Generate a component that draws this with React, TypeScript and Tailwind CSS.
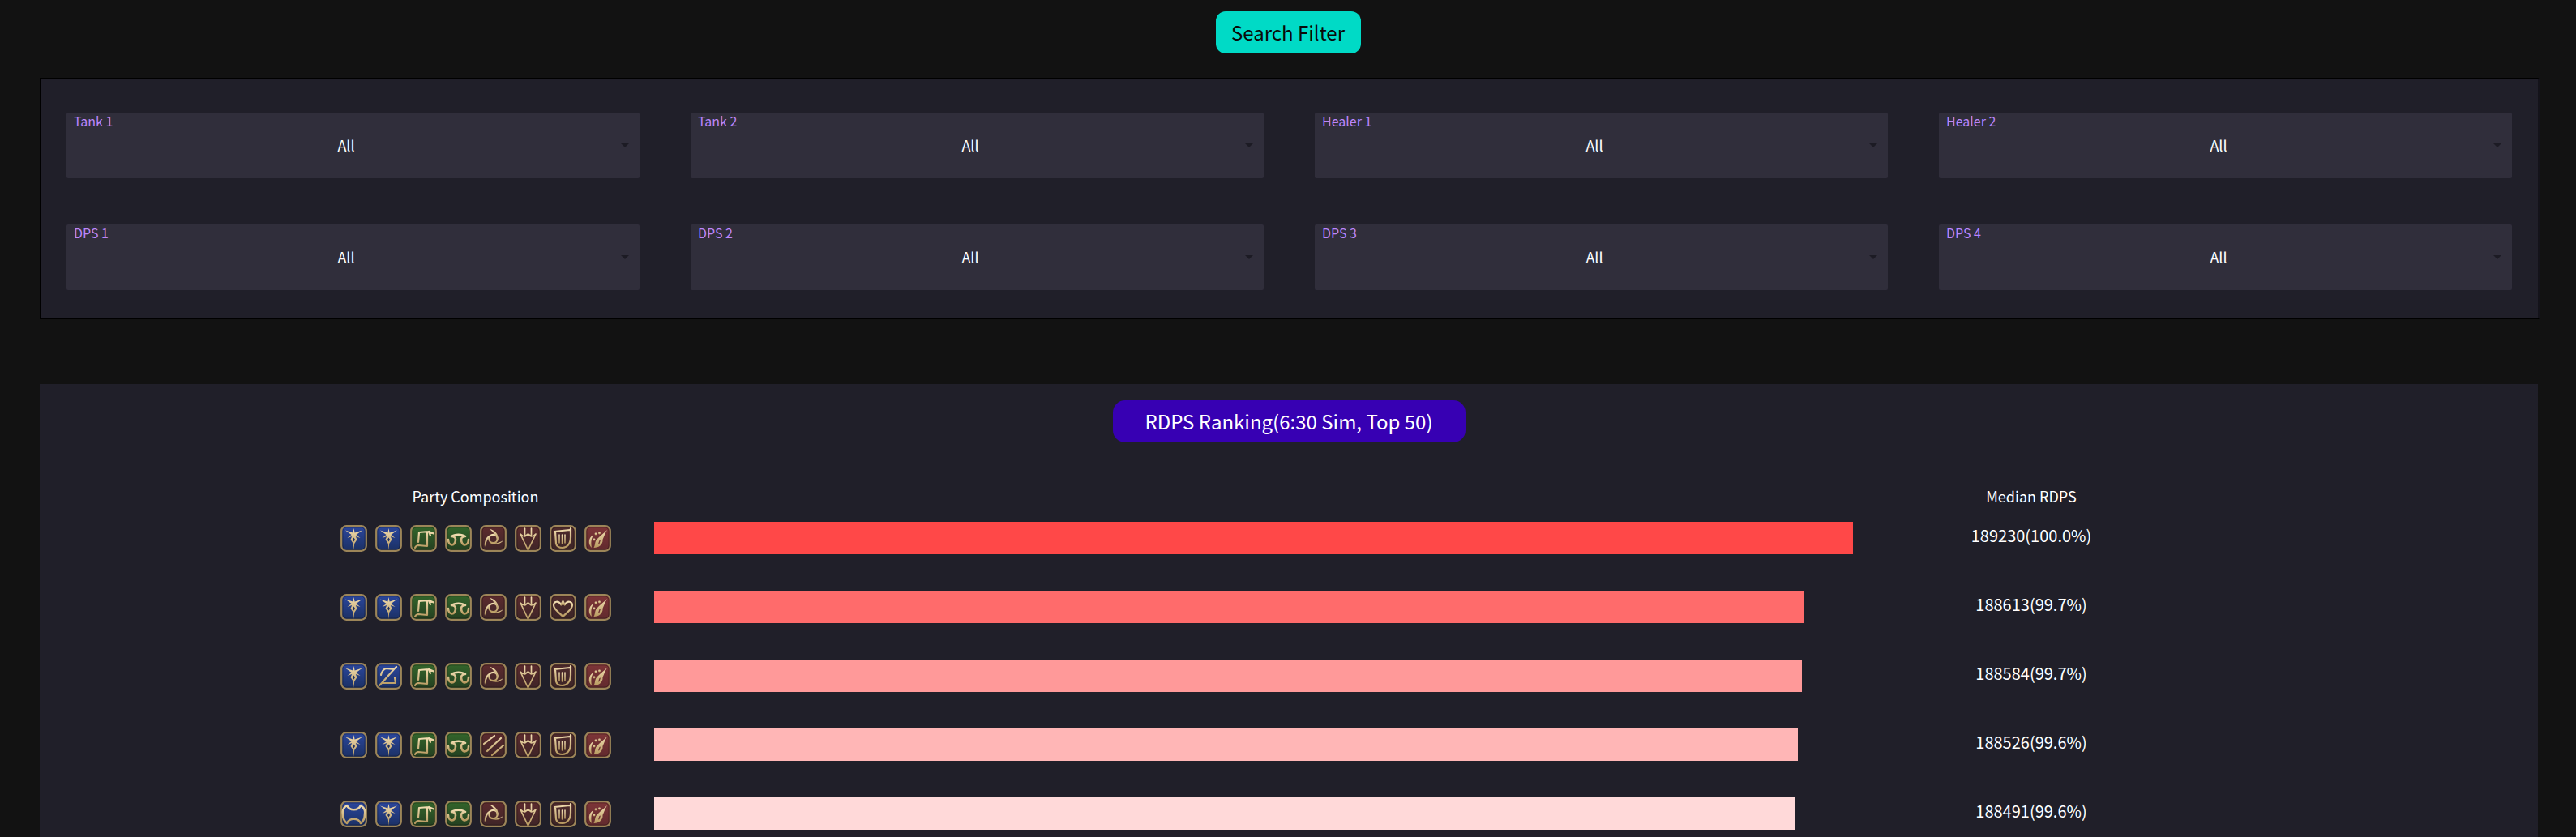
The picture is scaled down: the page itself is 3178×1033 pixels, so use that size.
import { useId } from "react";

const FONT = "font-['Noto_Sans_CJK_KR','Noto_Sans',sans-serif]";

type Glyph =
  | "star"
  | "zed"
  | "bone"
  | "square"
  | "bowls"
  | "swirl"
  | "slashes"
  | "trident"
  | "lyre"
  | "heart"
  | "brush";

const backgrounds: Record<Glyph, [string, string]> = {
  star: ["#2b479f", "#1b3063"],
  zed: ["#2b479f", "#1b3063"],
  bone: ["#2b479f", "#1b3063"],
  square: ["#33662b", "#243f20"],
  bowls: ["#33662b", "#243f20"],
  swirl: ["#5d2b2e", "#3e2527"],
  slashes: ["#5d2b2e", "#3e2527"],
  trident: ["#5d2b2e", "#3e2527"],
  lyre: ["#4f2a2c", "#3c2526"],
  heart: ["#4f2a2c", "#3c2526"],
  brush: ["#7f3538", "#602a2d"],
};

function GlyphShape({ name, paint }: { name: Glyph; paint: string }) {
  const line = {
    fill: "none",
    stroke: paint,
    strokeWidth: 2.2,
    strokeLinecap: "round" as const,
    strokeLinejoin: "round" as const,
  };
  switch (name) {
    case "star":
      return (
        <>
          <path
            fill={paint}
            d="M16.5 4 L17.6 9.5 L27 6.5 L19.5 12 L24.5 16 L18.8 14 L20.5 18 L17.2 23 L16.5 31 L15.8 23 L12.5 18 L14.2 14 L8.5 16 L13.5 12 L6 6.5 L15.4 9.5 Z"
          />
          <path fill="#1d2f5e" d="M16.5 15.5 L18 18 L16.5 20.5 L15 18 Z" />
        </>
      );
    case "zed":
      return (
        <path
          {...line}
          d="M7 15 C8 11 10 8 13 7 L23 8 L8 25 L25 25 L24 18 M23 8 L26 5 M8 25 L5 28"
        />
      );
    case "bone":
      return (
        <path
          {...line}
          strokeWidth={2.6}
          d="M8 6 C11 13 22 13 25 6 C30 9 31 14 30 17 C30 21 29 25 25 28 C22 21 11 21 8 28 C4 25 3 21 3 17 C2 14 3 9 8 6 Z"
        />
      );
    case "square":
      return (
        <path
          {...line}
          d="M6 28 C7 26 8 25 10 25 L21 26 L21 9 M10 21 L11 9 L23 8 L29 10.5 M23 8 L25 13"
        />
      );
    case "bowls":
      return (
        <path
          {...line}
          strokeWidth={2.6}
          d="M8 14 C12 11 21 11 25 14 M4 18 C4 26 13 27 13 18 C13 15 10 14 8 14 M29 18 C29 26 20 27 20 18 C20 15 23 14 25 14"
        />
      );
    case "swirl":
      return (
        <>
          <circle cx="16.5" cy="17" r="5.2" {...line} />
          <path fill={paint} d="M12 5 C18 6 24 11 22 19 C20 13 17 9 12 5 Z" />
          <path fill={paint} d="M6 27 C5 20 8 14 13 12 C10 16 8 21 6 27 Z" />
          <path fill={paint} d="M29 19 C25 24 19 25 14 22 C19 23 24 22 29 19 Z" />
        </>
      );
    case "slashes":
      return (
        <path {...line} d="M5 15 L18 5 M9 24 L26 8 M15 29 L29 17" />
      );
    case "trident":
      return (
        <path
          {...line}
          strokeWidth={1.7}
          d="M12.5 4 L12.5 14 M20.5 4 L20.5 14 M7 11 C9 13 11 14 12.5 14 L16.5 11 L20.5 14 C22 14 24 13 26 11 L16.5 31 Z"
        />
      );
    case "lyre":
      return (
        <>
          <path
            {...line}
            d="M6 8 L25 6 M26 4 L26 15 C26 24 21 28 16 28 C12 28 9 27 8 23 M7 8 L8 23"
          />
          <path {...line} strokeWidth={1.5} d="M12 12 L12 22 M15.5 12 L15.5 23 M19 12 L19 22" />
        </>
      );
    case "heart":
      return (
        <>
          <path
            {...line}
            d="M16.5 28 C12 23 5 19 5 14 C5 9 11 8 14 13 M16.5 28 C21 23 28 19 28 14 C28 9 22 8 19 13"
          />
          <path
            fill={paint}
            d="M16.5 7 C15 10 13 12 14 15 C15 14 16 13 16.5 13 C17 13 18 14 19 15 C20 12 18 10 16.5 7 Z"
          />
        </>
      );
    case "brush":
      return (
        <>
          <path
            fill={paint}
            d="M28 6 C25 11 24 15 22.5 18 C23 24 18 28 11.5 28 C14 24 12 20 17 16 C20 13 25 9 28 6 Z"
          />
          <path fill={paint} d="M11 12 C5 15 4 24 9 28 C8 22 8 18 11 12 Z" />
          <circle cx="14" cy="11" r="1.4" fill={paint} />
          <circle cx="18.5" cy="10" r="1.4" fill={paint} />
          <circle cx="12" cy="18" r="1.4" fill={paint} />
          <path fill="#6d2e31" d="M18.5 19 L20 18.5 L18.5 23 L17 23.5 Z" />
        </>
      );
  }
}

function JobIcon({ name }: { name: Glyph }) {
  const id = useId();
  const [top, bottom] = backgrounds[name];
  return (
    <svg width="33" height="33" viewBox="0 0 33 33" className="shrink-0">
      <defs>
        <linearGradient id={`${id}bg`} x1="0" y1="0" x2="0" y2="1">
          <stop offset="0" stopColor={top} />
          <stop offset="1" stopColor={bottom} />
        </linearGradient>
        <linearGradient id={`${id}gold`} x1="0" y1="0" x2="0" y2="1">
          <stop offset="0" stopColor="#f0dcb0" />
          <stop offset="1" stopColor="#b89a60" />
        </linearGradient>
      </defs>
      <rect x="1.2" y="1.2" width="30.6" height="30.6" rx="6" fill={`url(#${id}bg)`} />
      <rect x="1.2" y="1.2" width="30.6" height="30.6" rx="6" fill="none" stroke="#9c8558" strokeWidth="2.2" />
      <rect x="2.9" y="2.9" width="27.2" height="27.2" rx="4.6" fill="none" stroke="#000" strokeOpacity="0.35" strokeWidth="0.9" />
      <GlyphShape name={name} paint={`url(#${id}gold)`} />
    </svg>
  );
}

const slots = [
  ["Tank 1", "Tank 2", "Healer 1", "Healer 2"],
  ["DPS 1", "DPS 2", "DPS 3", "DPS 4"],
].flat();

const rows: { party: Glyph[]; width: number; color: string; value: string }[] = [
  {
    party: ["star", "star", "square", "bowls", "swirl", "trident", "lyre", "brush"],
    width: 1479,
    color: "#ff4848",
    value: "189230(100.0%)",
  },
  {
    party: ["star", "star", "square", "bowls", "swirl", "trident", "heart", "brush"],
    width: 1419,
    color: "#ff6b6b",
    value: "188613(99.7%)",
  },
  {
    party: ["star", "zed", "square", "bowls", "swirl", "trident", "lyre", "brush"],
    width: 1416,
    color: "#ff9999",
    value: "188584(99.7%)",
  },
  {
    party: ["star", "star", "square", "bowls", "slashes", "trident", "lyre", "brush"],
    width: 1411,
    color: "#ffb6b6",
    value: "188526(99.6%)",
  },
  {
    party: ["bone", "star", "square", "bowls", "swirl", "trident", "lyre", "brush"],
    width: 1407,
    color: "#ffd9d9",
    value: "188491(99.6%)",
  },
];

function SlotSelect({ label }: { label: string }) {
  return (
    <div className="relative flex h-[81px] items-center justify-center rounded-[2px] bg-[#302e3b] pr-[17px]">
      <span className="absolute left-[9px] top-0 text-[16px] leading-[20px] text-[#bb86fc]">
        {label}
      </span>
      <span className="text-[18px] leading-[27px] text-white">All</span>
      <span className="absolute right-[13px] top-[38px] h-0 w-0 border-x-[5px] border-t-[5px] border-x-transparent border-t-[#1c1b24]" />
    </div>
  );
}

export default function App() {
  return (
    <div className={`h-screen overflow-hidden bg-[#121212] ${FONT}`}>
      <div className="flex justify-center pt-[14px]">
        <div className="flex h-[52px] w-[179px] items-center justify-center rounded-[12px] bg-[#00dac6] text-[24px] text-[#0a0a0a]">
          Search Filter
        </div>
      </div>

      <div className="ml-[49px] mr-[45px] mt-[30px] grid grid-cols-4 gap-x-[63px] gap-y-[57px] border border-b-2 border-r-2 border-black border-r-[#14131a] bg-[#201f29] pb-[34px] pl-[32px] pr-[32px] pt-[42px]">
        {slots.map((s) => (
          <SlotSelect key={s} label={s} />
        ))}
      </div>

      <div className="ml-[49px] mr-[47px] mt-[80px] h-[600px] bg-[#201f29] pt-[20px]">
        <div className="flex justify-center">
          <div className="flex h-[52px] w-[435px] items-center justify-center rounded-[15px] bg-[#3700b3] text-[24px] text-white">
            RDPS Ranking(6:30 Sim, Top 50)
          </div>
        </div>

        <div className="mt-[51px] flex pl-[371px] text-[18px] leading-[30px] text-white">
          <div className="w-[333px] text-center">Party Composition</div>
          <div className="ml-[54px] w-[1479px]" />
          <div className="w-[440px] text-center">Median RDPS</div>
        </div>

        <div className="mt-[17px] flex flex-col gap-[45px] pl-[371px]">
          {rows.map((r) => (
            <div key={r.value} className="flex h-[40px] items-center">
              <div className="flex w-[333px] gap-[10px]">
                {r.party.map((g, i) => (
                  <JobIcon key={i} name={g} />
                ))}
              </div>
              <div className="ml-[54px] w-[1479px]">
                <div className="h-[40px]" style={{ width: r.width, background: r.color }} />
              </div>
              <div className="mb-[6px] w-[440px] text-center text-[20px] leading-[30px] text-white">
                {r.value}
              </div>
            </div>
          ))}
        </div>
      </div>
    </div>
  );
}
